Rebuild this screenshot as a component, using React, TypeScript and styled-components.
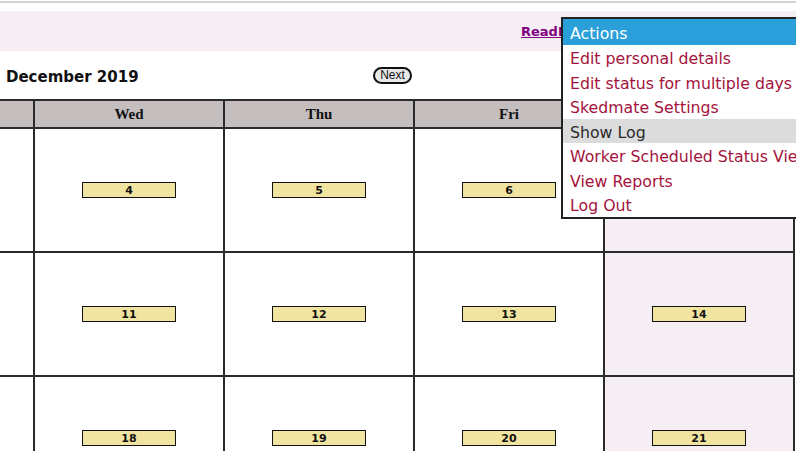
import React from "react";
import styled, { createGlobalStyle } from "styled-components";

const GlobalStyle = createGlobalStyle`
  html, body {
    margin: 0;
    padding: 0;
    overflow: hidden;
    background: #ffffff;
    font-family: "DejaVu Sans", Verdana, sans-serif;
  }
`;

const Page = styled.div`
  position: relative;
  width: 796px;
  height: 451px;
  overflow: hidden;
`;

const TopRule = styled.div`
  margin-top: 1px;
  height: 2px;
  background: #d4d4d4;
  margin-bottom: 8px;
`;

const Banner = styled.div`
  height: 40px;
  background: #f5eef5;
  display: flex;
  align-items: center;
  padding-left: 521px;
`;

const ReadMeLink = styled.a`
  font-family: "DejaVu Sans", Verdana, sans-serif;
  font-weight: bold;
  font-size: 13px;
  color: #800080;
  text-decoration: underline;
`;

const TitleBar = styled.div`
  height: 48px;
  display: flex;
  align-items: center;
  padding-left: 6px;
`;

const MonthTitle = styled.div`
  flex: 0 0 367px;
  padding-top: 3px;
  font-family: "DejaVu Sans", Verdana, sans-serif;
  font-weight: bold;
  font-size: 15px;
  color: #111;
`;

const NavButton = styled.button`
  box-sizing: border-box;
  width: 39px;
  height: 17px;
  padding: 0;
  margin-top: 1px;
  border: 2px solid #111;
  border-radius: 9px;
  background: #e8e8e8;
  font-family: "Liberation Sans", Arial, sans-serif;
  font-size: 12px;
  color: #111;
  line-height: 13px;
`;

const CalendarViewport = styled.div`
  overflow: hidden;
`;

const CalendarGrid = styled.div`
  display: grid;
  grid-template-columns: repeat(7, 188px);
  grid-template-rows: 26px;
  grid-auto-rows: 122px;
  gap: 2px;
  padding: 2px;
  width: max-content;
  background: #2b2b2b;
  margin-left: -537px;
`;

const HeaderCell = styled.div`
  background: #c4bebf;
  display: flex;
  align-items: center;
  justify-content: center;
  font-family: "Liberation Serif", "Times New Roman", serif;
  font-weight: bold;
  font-size: 15px;
  color: #111;
`;

const DayCell = styled.div<{ $weekend?: boolean }>`
  background: ${(p) => (p.$weekend ? "#f5eef5" : "#ffffff")};
  display: flex;
  align-items: center;
  justify-content: center;
`;

const DayBadge = styled.div`
  box-sizing: border-box;
  width: 94px;
  height: 16px;
  border: 1px solid #111;
  background: #f0e4a0;
  display: flex;
  align-items: center;
  justify-content: center;
  font-family: "DejaVu Sans", Verdana, sans-serif;
  font-weight: bold;
  font-size: 11px;
  color: #111;
`;

const ActionsMenu = styled.div`
  position: absolute;
  top: 17px;
  left: 561px;
  width: 260px;
  border: 2px solid #222;
  background: #ffffff;
  font-family: "DejaVu Sans", sans-serif;
  font-size: 15.75px;
  white-space: nowrap;
`;

const MenuHeader = styled.div`
  box-sizing: border-box;
  height: 26px;
  padding-top: 3px;
  line-height: 23px;
  padding-left: 7px;
  background: #2b9fd9;
  color: #ffffff;
`;

const MenuItem = styled.div<{ $active?: boolean }>`
  box-sizing: border-box;
  height: 24.5px;
  padding-top: 3px;
  line-height: 21.5px;
  padding-left: 7px;
  background: ${(p) => (p.$active ? "#dcdcdc" : "transparent")};
  color: ${(p) => (p.$active ? "#2a2a2a" : "#a3133b")};
`;

const days = ["Sun", "Mon", "Tue", "Wed", "Thu", "Fri", "Sat"];

const weeks: (number | null)[][] = [
  [1, 2, 3, 4, 5, 6, 7],
  [8, 9, 10, 11, 12, 13, 14],
  [15, 16, 17, 18, 19, 20, 21],
  [22, 23, 24, 25, 26, 27, 28],
  [29, 30, 31, null, null, null, null],
];

const menuItems = [
  "Edit personal details",
  "Edit status for multiple days",
  "Skedmate Settings",
  "Show Log",
  "Worker Scheduled Status View",
  "View Reports",
  "Log Out",
];

export default function App() {
  return (
    <>
      <GlobalStyle />
      <Page>
        <TopRule />
        <Banner>
          <ReadMeLink href="#">ReadMe</ReadMeLink>
        </Banner>
        <TitleBar>
          <MonthTitle>December 2019</MonthTitle>
          <NavButton>Next</NavButton>
        </TitleBar>
        <CalendarViewport>
          <CalendarGrid>
            {days.map((d) => (
              <HeaderCell key={d}>{d}</HeaderCell>
            ))}
            {weeks.map((week, wi) =>
              week.map((n, di) => (
                <DayCell key={`${wi}-${di}`} $weekend={di === 6}>
                  {n !== null && <DayBadge>{n}</DayBadge>}
                </DayCell>
              ))
            )}
          </CalendarGrid>
        </CalendarViewport>
        <ActionsMenu>
          <MenuHeader>Actions</MenuHeader>
          {menuItems.map((m) => (
            <MenuItem key={m} $active={m === "Show Log"}>
              {m}
            </MenuItem>
          ))}
        </ActionsMenu>
      </Page>
    </>
  );
}
